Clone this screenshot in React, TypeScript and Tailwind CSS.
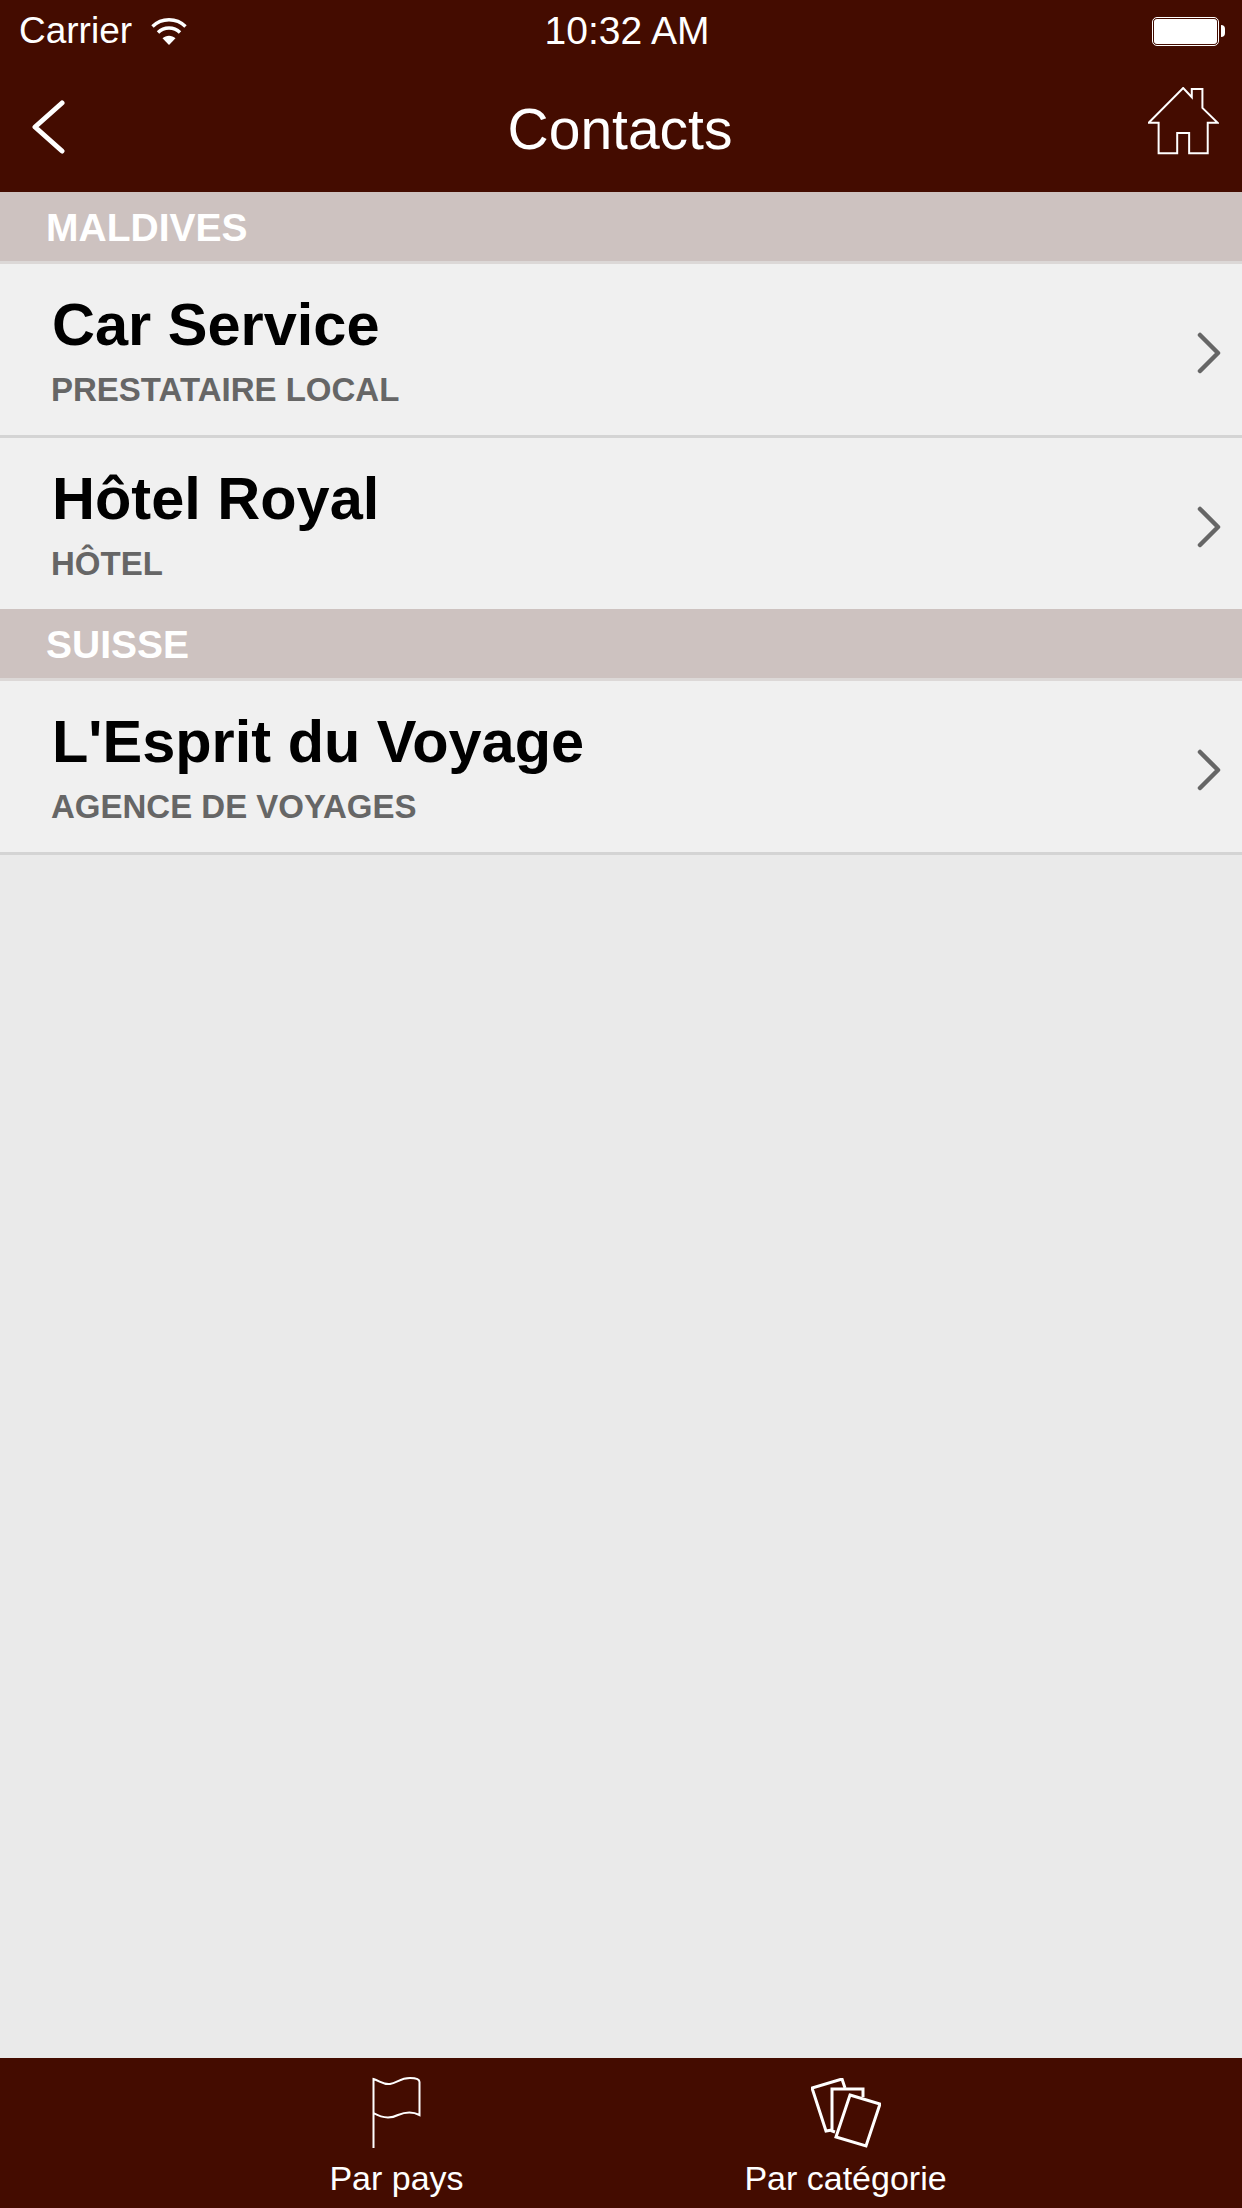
const groups = [
  {
    name: "MALDIVES",
    items: [
      { title: "Car Service", type: "PRESTATAIRE LOCAL" },
      { title: "Hôtel Royal", type: "HÔTEL" },
    ],
  },
  {
    name: "SUISSE",
    items: [{ title: "L'Esprit du Voyage", type: "AGENCE DE VOYAGES" }],
  },
];

function Wifi() {
  return (
    <svg width="36" height="27" viewBox="0 0 36 27" fill="none" stroke="white" strokeWidth="3.4">
      <path d="M1.5 8.5C10.5 -0.5 25.5 -0.5 34.5 8.5" />
      <path d="M7 14.5C13 8.5 23 8.5 29 14.5" />
      <path d="M18 27L11.5 20.2C15 16.8 21 16.8 24.5 20.2Z" fill="white" stroke="none" />
    </svg>
  );
}

function Battery() {
  return (
    <div className="flex items-center gap-[2px]">
      <div className="h-[29px] w-[67px] rounded-[5px] border border-white p-[1px]">
        <div className="h-full w-full rounded-[3px] bg-white" />
      </div>
      <div className="h-[12px] w-[4px] rounded-r-full bg-white" />
    </div>
  );
}

function BackIcon() {
  return (
    <svg width="33" height="54" viewBox="0 0 33 54" fill="none" stroke="white" strokeWidth="5" strokeLinecap="round" strokeLinejoin="round">
      <path d="M30 3L3 27L30 51" />
    </svg>
  );
}

function HomeIcon() {
  return (
    <svg width="71" height="68" viewBox="618 260 214 203" fill="none" stroke="white" strokeWidth="6" className="mb-[12px]">
      <path d="M620 367L724 262L750 290V265H782V322L828 367H798V459H742V398H706V459H650V367Z" />
    </svg>
  );
}

function FlagIcon() {
  return (
    <svg width="49" height="71" viewBox="0 0 49 71" fill="none" stroke="white" strokeWidth="2">
      <path d="M1.5 71V2C8 4 12 8 18 7C25 6 28 1 38 1C45 1 47.5 2 47.5 5V38C40 34 33 35 26 38C18 42 10 41 1.5 36" />
    </svg>
  );
}

function CardsIcon() {
  return (
    <svg width="70" height="70" viewBox="0 0 70 70" fill="none" stroke="white" strokeWidth="3">
      <path d="M21 52L15 53L1 10L31 1L34 10" />
      <path d="M24 54L21 53V11H52V19" />
      <path d="M39 17L69 26L55 68L25 59Z" />
    </svg>
  );
}

function Chevron() {
  return (
    <svg width="24" height="42" viewBox="0 0 24 42" fill="none" stroke="#666666" strokeWidth="4.5" strokeLinecap="round" strokeLinejoin="round" className="mt-[6px]">
      <path d="M3 3L21 21L3 39" />
    </svg>
  );
}

export default function App() {
  return (
    <div className="flex h-[2208px] w-[1242px] flex-col bg-[#eaeaea] font-['Liberation_Sans',sans-serif]">
      <header className="h-[192px] bg-[#440c00] text-white">
        <div className="flex h-[62px] items-center justify-between pl-[19px] pr-[17px]">
          <div className="flex w-[310px] items-center gap-[19px] text-[37px]">
            <span>Carrier</span>
            <Wifi />
          </div>
          <span className="text-[39px]">10:32 AM</span>
          <div className="flex w-[300px] justify-end">
            <Battery />
          </div>
        </div>
        <div className="flex h-[130px] items-center justify-between pl-[32px] pr-[23px]">
          <BackIcon />
          <h1 className="mt-[6px] pl-[27px] text-[57px]">Contacts</h1>
          <HomeIcon />
        </div>
      </header>

      <main className="flex-1">
        {groups.map((group) => (
          <section key={group.name} className="border-[#d4d4d4] last:border-b-[3px]">
            <div className="flex h-[72px] items-center border-b-[3px] border-[#dcd8d7] bg-[#cdc2c0] pt-[4px] pl-[46px] text-[39px] font-bold text-white">
              {group.name}
            </div>
            <div className="divide-y-[3px] divide-[#d4d4d4]">
              {group.items.map((item) => (
                <div key={item.title} className="box-content flex h-[171px] items-center justify-between bg-[#f0f0f0] pl-[52px] pr-[21px]">
                  <div>
                    <div className="text-[59.5px] leading-[70px] font-bold text-black">{item.title}</div>
                    <div className="mt-[10px] -ml-px text-[33px] leading-[40px] font-bold text-[#666666]">{item.type}</div>
                  </div>
                  <Chevron />
                </div>
              ))}
            </div>
          </section>
        ))}
      </main>

      <nav className="flex h-[150px] justify-center gap-[149px] bg-[#440c00] pt-[19px] text-white">
        <div className="flex w-[300px] flex-col items-center">
          <div className="flex h-[71px] items-center">
            <FlagIcon />
          </div>
          <span className="mt-[10px] text-[34px] leading-[40px]">Par pays</span>
        </div>
        <div className="flex w-[300px] flex-col items-center">
          <div className="flex h-[71px] items-center">
            <CardsIcon />
          </div>
          <span className="mt-[10px] text-[34px] leading-[40px]">Par catégorie</span>
        </div>
      </nav>
    </div>
  );
}
